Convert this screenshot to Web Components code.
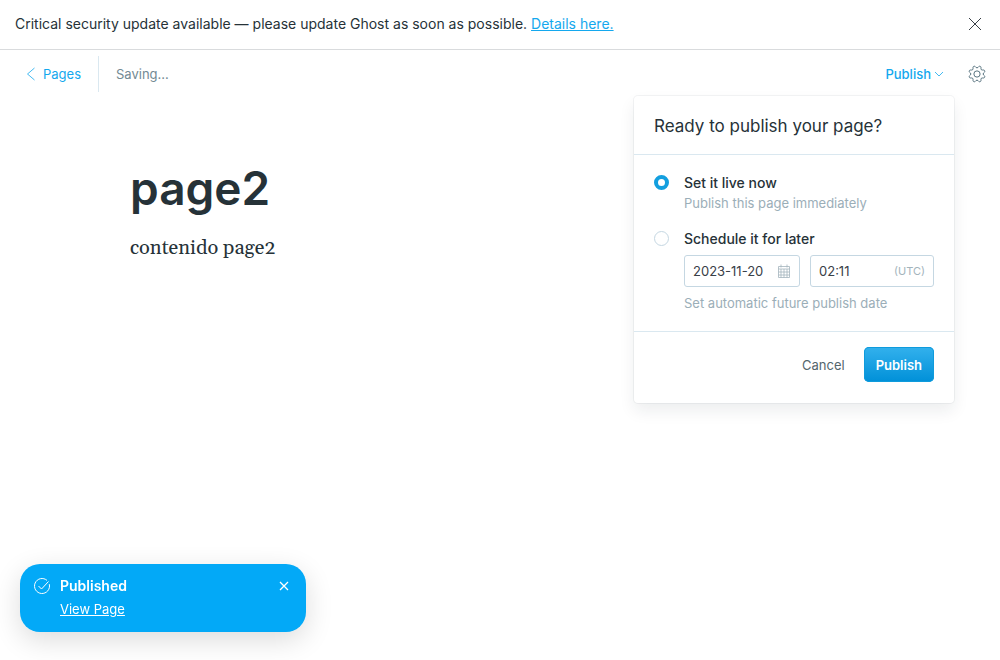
<!DOCTYPE html>
<html lang="en">
<head>
<meta charset="utf-8">
<title>Page editor</title>
<style>
  :root {
    --blue: #14a8ee;
    --body: #394047;
    --mid: #738a94;
    --light: #9baeb8;
    --line: #dae8f0;
    --field: #c5d7e2;
  }
  body {
    margin: 0;
    background: #fff;
    color: #263238;
    font: 14px/20px Inter, "Open Sans", sans-serif;
  }
</style>
</head>
<body>
<ghost-editor></ghost-editor>

<template id="editor">
  <style>
    :host { display: flex; flex-direction: column; min-height: 100vh; }
  </style>
  <update-banner>
    Critical security update available — please update Ghost as soon as possible.
    <a slot="link" href="#details">Details here.</a>
  </update-banner>
  <editor-toolbar status="Saving..."></editor-toolbar>
  <page-content>
    <span slot="title">page2</span>
    contenido page2
  </page-content>
  <toast-message>
    Published
    <a slot="action" href="#view">View Page</a>
  </toast-message>
</template>

<template id="banner">
  <style>
    :host { display: flex; align-items: center; justify-content: space-between; padding: 14px 15px 15px; border-bottom: 1px solid #d9dbdd; }
    p { margin: 0; font-size: 14px; }
    ::slotted(a) { color: var(--blue); text-decoration: underline; }
    button { display: flex; padding: 0; border: 0; background: none; color: #394047; cursor: pointer; }
    svg { width: 20px; height: 20px; }
  </style>
  <p><slot></slot> <slot name="link"></slot></p>
  <button aria-label="Close"><svg viewBox="0 0 20 20" fill="none" stroke="currentColor"><path d="M4 4l12 12M16 4L4 16"/></svg></button>
</template>

<template id="toolbar">
  <style>
    :host { display: flex; align-items: center; height: 48px; padding: 0 14px 0 26px; font-size: 13px; position: relative; }
    a, button { display: flex; align-items: center; padding: 0; border: 0; background: none; font: inherit; font-weight: 500; color: var(--blue); text-decoration: none; cursor: pointer; }
    a { gap: 7px; height: 36px; padding-right: 17px; border-right: 1px solid var(--line); font-weight: 400; }
    .status { margin-left: 17px; color: var(--mid); }
    .menu { margin-left: auto; gap: 3px; }
    .gear { margin-left: 24px; color: #54707c; }
    svg { fill: none; stroke: currentColor; }
    a svg, .menu svg { stroke-width: .8; }
    publish-menu { position: absolute; top: 46px; right: 46px; z-index: 2; }
  </style>
  <a href="#pages"><svg width="10" height="14" viewBox="0 0 10 14"><path d="M8.500 1L1.500 7l7 6"/></svg>Pages</a>
  <span class="status"></span>
  <button class="menu" aria-expanded="true">Publish <svg width="10" height="8" viewBox="0 0 10 8"><path d="M1 2l4 4 4-4"/></svg></button>
  <button class="gear" aria-label="Settings"><svg width="18" height="18" viewBox="-1 -1 26 26" stroke-width="1.4"><circle cx="12" cy="12" r="4.500"/><path d="M10.546 2.438a1.957 1.957 0 0 0 2.908 0L14.4 1.4a1.959 1.959 0 0 1 3.41 1.413l-.071 1.4a1.958 1.958 0 0 0 2.051 2.054l1.4-.071a1.959 1.959 0 0 1 1.41 3.41l-1.042.94a1.96 1.96 0 0 0 0 2.909l1.042.94a1.959 1.959 0 0 1-1.413 3.41l-1.4-.071a1.958 1.958 0 0 0-2.056 2.056l.071 1.4A1.959 1.959 0 0 1 14.4 22.6l-.941-1.041a1.959 1.959 0 0 0-2.908 0L9.606 22.6A1.959 1.959 0 0 1 6.2 21.192l.072-1.4a1.958 1.958 0 0 0-2.056-2.056l-1.4.071A1.958 1.958 0 0 1 1.4 14.4l1.041-.94a1.96 1.96 0 0 0 0-2.909L1.4 9.606A1.958 1.958 0 0 1 2.809 6.2l1.4.071a1.958 1.958 0 0 0 2.058-2.06L6.2 2.81A1.959 1.959 0 0 1 9.606 1.4z"/></svg></button>
  <publish-menu></publish-menu>
</template>

<template id="menu">
  <style>
    :host { display: block; width: 320px; border-radius: 4px; background: #fff; box-shadow: 0 0 0 1px rgba(99,114,130,.08), 0 8px 16px rgba(27,39,51,.08); font-size: 13px; }
    h2 { margin: 0; padding: 18px 20px 16px; border-bottom: 1px solid var(--line); font-size: 17px; line-height: 24px; font-weight: 400; }
    fieldset { margin: 0; border: 0; padding: 18px 20px; display: grid; gap: 16px; }
    .dates { display: flex; gap: 10px; margin: 6px 0; }
    footer { display: flex; justify-content: flex-end; align-items: center; gap: 19px; padding: 15px 20px 21px; border-top: 1px solid var(--line); }
    button { border: 0; background: none; padding: 0; font: inherit; color: #54666d; cursor: pointer; }
    .go { height: 35px; padding: 0 12px; border-radius: 5px; color: #fff; font-weight: 600; background: linear-gradient(#33b1ed, #0090d8); box-shadow: inset 0 0 0 1px #0f9bdc; }
    date-field { flex: 0 0 116px; }
    date-field + date-field { flex: 1; }
  </style>
  <h2>Ready to publish your page?</h2>
  <fieldset aria-label="Publish time">
    <publish-option label="Set it live now" selected>Publish this page immediately</publish-option>
    <publish-option label="Schedule it for later">
      <div class="dates" slot="fields">
        <date-field label="Date" value="2023-11-20"><svg slot="suffix" width="14" height="14" viewBox="0 0 14 14" fill="none" stroke="#a3b4bc" stroke-width=".8"><path d="M1.500 2.500h11v11h-11zM1.500 5h11M4 5v8.500M7 5v8.500M10 5v8.500M1.500 8h11M1.500 11h11M4 .5v3M10 .5v3"/></svg></date-field>
        <date-field label="Time" value="02:11"><span slot="suffix">(UTC)</span></date-field>
      </div>
      Set automatic future publish date
    </publish-option>
  </fieldset>
  <footer><button>Cancel</button><button class="go">Publish</button></footer>
</template>

<template id="option">
  <style>
    :host { display: grid; grid-template-columns: 16px 1fr; column-gap: 14px; }
    input { appearance: none; box-sizing: border-box; width: 15px; height: 15px; margin: 2px 0 0; border: 1px solid var(--field); border-radius: 50%; background: #fff; }
    input:checked { border: 4px solid #139fdf; }
    label { font-size: 14px; line-height: 20px; font-weight: 500; }
    .rest { grid-column: 2; color: var(--light); line-height: 20px; }
  </style>
  <input type="radio" id="choice"><label for="choice"></label>
  <div class="rest"><slot name="fields"></slot><slot></slot></div>
</template>

<template id="field">
  <style>
    :host { display: flex; align-items: center; box-sizing: border-box; height: 32px; min-width: 0; padding: 0 8px; border: 1px solid var(--field); border-radius: 3px; font-size: 11px; color: #a3b4bc; }
    input { flex: 1; min-width: 0; width: 0; padding: 0; border: 0; outline: 0; background: none; font: inherit; font-size: 13px; color: var(--body); }
  </style>
  <input type="text"><slot name="suffix"></slot>
</template>

<template id="content">
  <style>
    :host { display: block; flex: 1; padding: 60px 130px; }
    h1 { margin: 0 0 14px; font-size: 46px; line-height: 60px; font-weight: 600; }
    p { margin: 0; font: 20px/32px Georgia, Gelasio, "Liberation Serif", serif; }
  </style>
  <h1><slot name="title"></slot></h1>
  <p><slot></slot></p>
</template>

<template id="toast">
  <style>
    :host { position: fixed; left: 20px; bottom: 28px; display: flex; align-items: flex-start; gap: 10px; box-sizing: border-box; width: 286px; padding: 12px 14px; border-radius: 20px; background: #03a9f7; color: #fff; box-shadow: 0 8px 28px rgba(0,0,0,.14); }
    .text { flex: 1; display: grid; gap: 2px; }
    strong { font-weight: 600; line-height: 20px; }
    ::slotted(a) { color: #fff; font-size: 13px; line-height: 22px; text-decoration: underline; }
    button { display: flex; margin-top: 2px; padding: 0; border: 0; background: none; color: #fff; cursor: pointer; }
    svg { fill: none; stroke: currentColor; }
    .check { margin-top: 2px; }
  </style>
  <svg class="check" width="16" height="16" viewBox="0 0 16 16"><path d="M15.300 6.200A7.500 7.500 0 1 1 13 2.400M4.500 8l3 3L14.500 3.500"/></svg>
  <div class="text"><strong><slot></slot></strong><slot name="action"></slot></div>
  <button aria-label="Dismiss"><svg width="16" height="16" viewBox="0 0 16 16" stroke-width="1.300"><path d="M4 4l8 8M12 4l-8 8"/></svg></button>
</template>

<script>
  class Base extends HTMLElement {
    connectedCallback() {
      if (this.shadowRoot) return;
      const root = this.attachShadow({ mode: "open" });
      root.append(document.getElementById(this.constructor.template).content.cloneNode(true));
      this.setup(root);
    }
    setup() {}
  }
  customElements.define("ghost-editor", class extends Base { static template = "editor"; });
  customElements.define("update-banner", class extends Base { static template = "banner"; });
  customElements.define("editor-toolbar", class extends Base {
    static template = "toolbar";
    setup(root) { root.querySelector(".status").textContent = this.getAttribute("status"); }
  });
  customElements.define("publish-menu", class extends Base {
    static template = "menu";
    setup(root) {
      // Each radio sits in its own shadow root, so the group is kept exclusive here.
      const options = root.querySelectorAll("publish-option");
      root.addEventListener("choose", e => options.forEach(o => {
        if (o !== e.target) o.shadowRoot.querySelector("input").checked = false;
      }));
    }
  });
  customElements.define("publish-option", class extends Base {
    static template = "option";
    setup(root) {
      root.querySelector("label").textContent = this.getAttribute("label");
      const input = root.querySelector("input");
      input.checked = this.hasAttribute("selected");
      input.addEventListener("change", () => this.dispatchEvent(new CustomEvent("choose", { bubbles: true })));
    }
  });
  customElements.define("date-field", class extends Base {
    static template = "field";
    setup(root) {
      const input = root.querySelector("input");
      input.value = this.getAttribute("value");
      input.setAttribute("aria-label", this.getAttribute("label"));
    }
  });
  customElements.define("page-content", class extends Base { static template = "content"; });
  customElements.define("toast-message", class extends Base { static template = "toast"; });
</script>
</body>
</html>
